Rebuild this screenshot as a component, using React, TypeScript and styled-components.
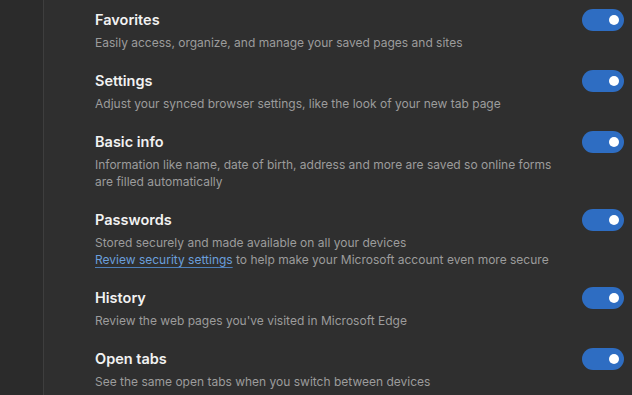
import styled, { createGlobalStyle } from "styled-components";

const GlobalStyle = createGlobalStyle`
  html, body {
    margin: 0;
    padding: 0;
    background: #2f2f2f;
  }
  body {
    font-family: Inter, "Noto Sans", "Liberation Sans", sans-serif;
    -webkit-font-smoothing: antialiased;
  }
`;

const Page = styled.div`
  display: flex;
  width: 632px;
  height: 395px;
  overflow: hidden;
  background: #2f2f2f;
`;

const Sidebar = styled.div`
  width: 43px;
  flex-shrink: 0;
  background: #2b2b2b;
  border-right: 1px solid #3e3e3e;
`;

const Content = styled.div`
  flex: 1;
  display: flex;
  flex-direction: column;
  padding: 10px 8px 0 51px;
`;

const Row = styled.div`
  display: flex;
  justify-content: space-between;
  align-items: flex-start;
  padding-bottom: 20px;
`;

const Text = styled.div`
  display: flex;
  flex-direction: column;
  gap: 4px;
  max-width: 476px;
`;

const Title = styled.div`
  color: #f2f2f2;
  font-size: 14.5px;
  font-weight: 600;
  line-height: 20px;
`;

const Desc = styled.div`
  color: #9c9c9c;
  font-size: 12px;
  line-height: 17px;
`;

const Link = styled.a`
  color: #6b9fdc;
  text-decoration: underline;
  text-underline-offset: 3px;
  text-decoration-color: #4f7fb8;
`;

const Toggle = styled.div<{ on: boolean }>`
  width: 42px;
  height: 22px;
  border-radius: 11px;
  background: ${(p) => (p.on ? "#2e6dc2" : "#555")};
  position: relative;
  flex-shrink: 0;
  margin-top: -1px;
`;

const Knob = styled.div<{ on: boolean }>`
  position: absolute;
  top: 6px;
  left: ${(p) => (p.on ? "27px" : "5px")};
  width: 10px;
  height: 10px;
  border-radius: 50%;
  background: #ffffff;
`;

interface IItem {
  title: string;
  desc: React.ReactNode;
}

const items: IItem[] = [
  { title: "Favorites", desc: "Easily access, organize, and manage your saved pages and sites" },
  { title: "Settings", desc: "Adjust your synced browser settings, like the look of your new tab page" },
  {
    title: "Basic info",
    desc: "Information like name, date of birth, address and more are saved so online forms are filled automatically",
  },
  {
    title: "Passwords",
    desc: (
      <>
        Stored securely and made available on all your devices
        <br />
        <Link>Review security settings</Link> to help make your Microsoft account even more secure
      </>
    ),
  },
  { title: "History", desc: "Review the web pages you've visited in Microsoft Edge" },
  { title: "Open tabs", desc: "See the same open tabs when you switch between devices" },
];

function App() {
  return (
    <>
      <GlobalStyle />
      <Page>
        <Sidebar />
        <Content>
          {items.map((item) => (
            <Row key={item.title}>
              <Text>
                <Title>{item.title}</Title>
                <Desc>{item.desc}</Desc>
              </Text>
              <Toggle on={true}>
                <Knob on={true} />
              </Toggle>
            </Row>
          ))}
        </Content>
      </Page>
    </>
  );
}

export default App;
